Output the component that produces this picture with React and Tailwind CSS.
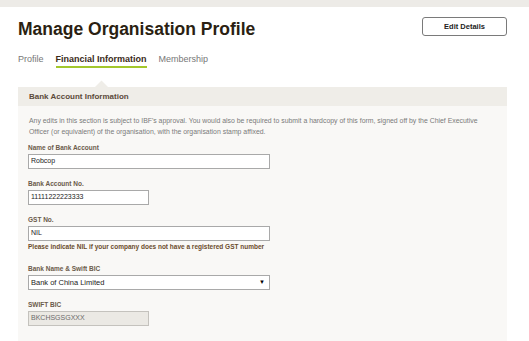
import React from 'react';

const font = { fontFamily: '"Liberation Sans", Arial, sans-serif' };

function Label({ children }) {
  return <div className="text-[6.5px] font-bold leading-[9px] text-[#6b5b4b] mb-[2px]">{children}</div>;
}

function Field({ label, value, wide = true, disabled = false, className = 'mb-[10px]' }) {
  return (
    <div className={className}>
      <Label>{label}</Label>
      <div
        className={`h-[15px] border flex items-center px-[2px] text-[7px] ${wide ? 'w-[242px]' : 'w-[121px]'} ${
          disabled ? 'bg-[#ebe9e4] border-[#c4c2bd] text-[#6b6b6b]' : 'bg-white border-[#a9a9a9] text-[#222]'
        }`}
      >
        {value}
      </div>
    </div>
  );
}

export default function App() {
  return (
    <div className="w-[529px] h-[341px] bg-white overflow-hidden" style={font}>
      <div className="h-[7px] bg-[#edebe7]" />

      <div className="px-[18px] pr-[22px]">
        <div className="flex items-start justify-between pt-[11px]">
          <h1 className="text-[17.5px] font-bold leading-[22px] text-[#2b1f12]">Manage Organisation Profile</h1>
          <button className="mt-[-1px] w-[85px] h-[19px] border border-[#7a7a7a] rounded-[3px] text-[7.5px] font-bold text-[#222] bg-white">
            Edit Details
          </button>
        </div>

        <div className="flex gap-[12px] mt-[13px] text-[9px] leading-[12px]">
          <span className="text-[#777]">Profile</span>
          <span className="font-bold text-[#3a2a1a] border-b-2 border-[#a3c72c] pb-[1px]">Financial Information</span>
          <span className="text-[#777]">Membership</span>
        </div>

        <div className="relative mt-[19px]">
          <svg className="absolute left-[76px] -top-[7px]" width="15" height="8" viewBox="0 0 15 8">
            <path d="M0 8 L7.5 0.5 L15 8 Z" fill="#efede8" />
          </svg>
          <div className="h-[19px] bg-[#efede8] flex items-center px-[11px] text-[8px] font-bold text-[#5b4a3a]">
            Bank Account Information
          </div>
          <div className="bg-[#f9f8f6] px-[10px] pt-[9px] pb-[20px]">
            <p className="text-[6.9px] leading-[11px] text-[#7a7a7a] px-[1px] mb-[6px] w-[470px]">
              Any edits in this section is subject to IBF's approval. You would also be required to submit a hardcopy of this form, signed off by the Chief Executive Officer (or equivalent) of the organisation, with the organisation stamp affixed.
            </p>
            <Field label="Name of Bank Account" value="Robcop" />
            <Field label="Bank Account No." value="11111222223333" wide={false} />
            <Field label="GST No." value="NIL" className="mb-0" />
            <div className="text-[6.5px] font-bold leading-[9px] text-[#6b4c2c] mt-[1px] mb-[13px]">
              Please indicate NIL if your company does not have a registered GST number
            </div>
            <div className="mb-[10px]">
              <Label>Bank Name &amp; Swift BIC</Label>
              <div className="w-[242px] h-[15px] bg-white border border-[#a9a9a9] flex items-center justify-between pl-[2px] pr-[4px] text-[7.5px] text-[#222]">
                <span>Bank of China Limited</span>
                <span className="text-[6px] text-black">▼</span>
              </div>
            </div>
            <Field label="SWIFT BIC" value="BKCHSGSGXXX" wide={false} disabled />
          </div>
        </div>
      </div>
    </div>
  );
}
